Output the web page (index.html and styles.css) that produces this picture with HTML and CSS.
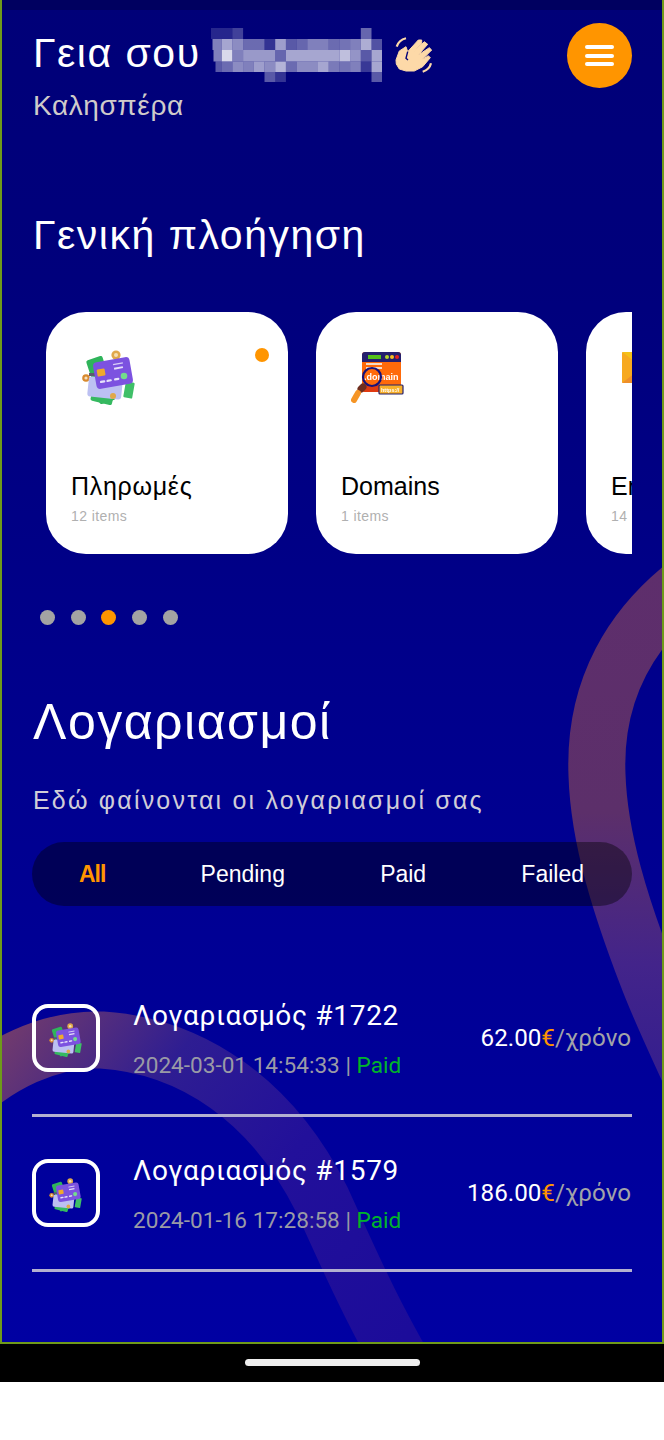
FILE: index.html
```html
<!DOCTYPE html>
<html lang="el">
<head>
<meta charset="utf-8">
<title>Λογαριασμοί</title>
<link rel="stylesheet" href="styles.css">
</head>
<body>
<svg width="0" height="0" class="defs">
  <defs>
    <symbol id="pay" viewBox="0 0 60 60">
      <rect x="12.5" y="12" width="17" height="46" rx="2" fill="#2fb45a" transform="rotate(-18 21 35)"/>
      <rect x="44.5" y="37" width="9" height="16" rx="1" fill="#3fbf68" transform="rotate(10 49 45)"/>
      <rect x="11" y="48" width="22" height="10" rx="2" fill="#35b960" transform="rotate(14 22 53)"/>
      <circle cx="36" cy="10" r="4.6" fill="#e0a84a"/>
      <circle cx="36" cy="10" r="2" fill="#f5e0b0"/>
      <circle cx="6" cy="33" r="3.8" fill="#d88a2e"/>
      <circle cx="6" cy="33" r="1.6" fill="#f3e0c0"/>
      <rect x="8" y="33" width="34" height="20" rx="3" fill="#bcc0f2" transform="rotate(6 25 43)"/>
      <rect x="9" y="28" width="9" height="3" fill="#5c5a70"/>
      <circle cx="33" cy="51" r="3" fill="#e0a84a"/>
      <rect x="14.5" y="14.5" width="37" height="27" rx="4" fill="#7c52e0" transform="rotate(-10 33 28)"/>
      <rect x="17" y="24" width="8" height="7" rx="1" fill="#f0a92c" transform="rotate(-10 21 27)"/>
      <rect x="33" y="18" width="10" height="1.5" fill="#d9cff7" transform="rotate(-10 38 19)"/>
      <rect x="34" y="22" width="9" height="2" fill="#e6dffa" transform="rotate(-10 38 23)"/>
      <circle cx="44" cy="31" r="3.3" fill="#73dd8c"/>
      <rect x="20" y="35.5" width="5.4" height="2.2" rx="1" fill="#e6e2fb" transform="rotate(-10 23 37)"/>
      <rect x="26.5" y="34.5" width="5.4" height="2.2" rx="1" fill="#e6e2fb" transform="rotate(-10 29 36)"/>
      <rect x="34" y="33" width="5.4" height="2.2" rx="1" fill="#e6e2fb" transform="rotate(-10 37 34)"/>
    </symbol>
  </defs>
</svg>

<div class="phone">
  <div class="screen">
    <svg class="swoosh" viewBox="0 0 660 1342" aria-hidden="true">
      <defs>
        <linearGradient id="gr" gradientUnits="userSpaceOnUse" x1="0" y1="560" x2="0" y2="1120">
          <stop offset="0" stop-color="#5e2e6c"/>
          <stop offset=".45" stop-color="#5c2f6a"/>
          <stop offset=".72" stop-color="#43248a"/>
          <stop offset="1" stop-color="#2f1c90"/>
        </linearGradient>
        <linearGradient id="gl" gradientUnits="userSpaceOnUse" x1="0" y1="1040" x2="400" y2="1340">
          <stop offset="0" stop-color="#703a6e"/>
          <stop offset=".3" stop-color="#2e1d92"/>
          <stop offset=".6" stop-color="#22109a"/>
          <stop offset="1" stop-color="#1c0c9a"/>
        </linearGradient>
      </defs>
      <path class="arc-r" d="M 720 560 C 620 620 592 700 595 775 C 597 840 620 910 645 975 C 660 1015 680 1055 700 1100"/>
      <path class="arc-l" d="M -50 1108 C -5 1062 50 1038 100 1040 C 190 1046 270 1100 320 1200 C 345 1255 365 1300 390 1345 C 402 1367 415 1390 430 1420"/>
    </svg>

    <header class="head">
      <div class="greet">
        <div class="hello">
          <span>Γεια σου</span>
          <svg class="mosaic" width="171" height="54" viewBox="0 0 171 54" aria-hidden="true">
            <g fill="#fff">
              <rect x="0" y="0" width="21.4" height="11" opacity=".15"/><rect x="21.4" y="0" width="10.7" height="11" opacity=".25"/><rect x="149.8" y="0" width="10.7" height="11" opacity=".4"/>
              <rect x="1.5" y="11" width="9.2" height="11" opacity=".5"/><rect x="10.7" y="11" width="10.7" height="11" opacity=".65"/><rect x="21.4" y="11" width="10.7" height="11" opacity=".55"/><rect x="32.1" y="11" width="21.4" height="11" opacity=".42"/><rect x="53.5" y="11" width="10.7" height="11" opacity=".2"/><rect x="64.2" y="11" width="10.7" height="11" opacity=".62"/><rect x="74.9" y="11" width="10.7" height="11" opacity=".35"/><rect x="85.6" y="11" width="10.7" height="11" opacity=".4"/><rect x="96.3" y="11" width="21.4" height="11" opacity=".5"/><rect x="117.7" y="11" width="10.7" height="11" opacity=".42"/><rect x="128.4" y="11" width="10.7" height="11" opacity=".45"/><rect x="139.1" y="11" width="10.7" height="11" opacity=".5"/><rect x="149.8" y="11" width="10.7" height="11" opacity=".68"/><rect x="160.5" y="11" width="10.5" height="11" opacity=".32"/>
              <rect x="2.5" y="22" width="8.2" height="11.5" opacity=".5"/><rect x="10.7" y="22" width="10.7" height="11.5" opacity=".85"/><rect x="21.4" y="22" width="10.7" height="11.5" opacity=".5"/><rect x="32.1" y="22" width="32.1" height="11.5" opacity=".6"/><rect x="64.2" y="22" width="10.7" height="11.5" opacity=".4"/><rect x="74.9" y="22" width="53.5" height="11.5" opacity=".65"/><rect x="128.4" y="22" width="10.7" height="11.5" opacity=".75"/><rect x="139.1" y="22" width="10.7" height="11.5" opacity=".58"/><rect x="149.8" y="22" width="10.7" height="11.5" opacity=".35"/><rect x="160.5" y="22" width="10.5" height="11.5" opacity=".65"/>
              <rect x="4.5" y="33.5" width="6.2" height="10.5" opacity=".35"/><rect x="10.7" y="33.5" width="10.7" height="10.5" opacity=".42"/><rect x="21.4" y="33.5" width="10.7" height="10.5" opacity=".55"/><rect x="32.1" y="33.5" width="10.7" height="10.5" opacity=".5"/><rect x="42.8" y="33.5" width="10.7" height="10.5" opacity=".62"/><rect x="53.5" y="33.5" width="10.7" height="10.5" opacity=".55"/><rect x="64.2" y="33.5" width="10.7" height="10.5" opacity=".7"/><rect x="74.9" y="33.5" width="10.7" height="10.5" opacity=".42"/><rect x="85.6" y="33.5" width="21.4" height="10.5" opacity=".55"/><rect x="107" y="33.5" width="10.7" height="10.5" opacity=".65"/><rect x="117.7" y="33.5" width="10.7" height="10.5" opacity=".48"/><rect x="128.4" y="33.5" width="10.7" height="10.5" opacity=".45"/><rect x="139.1" y="33.5" width="10.7" height="10.5" opacity=".5"/><rect x="149.8" y="33.5" width="10.7" height="10.5" opacity=".22"/><rect x="160.5" y="33.5" width="10.5" height="10.5" opacity=".65"/>
              <rect x="53.5" y="44" width="10.7" height="10" opacity=".35"/><rect x="64.2" y="44" width="10.7" height="10" opacity=".2"/><rect x="160.5" y="44" width="10.5" height="10" opacity=".35"/>
            </g>
          </svg>
          <svg class="wave" width="40" height="38" viewBox="0 0 40 38" aria-hidden="true">
            <path class="palm" d="M2 24 L5.3 15 L12 10.7 L13.7 15.7 L24.3 4 L27.7 4 L27.7 7.3 L20.3 15.7 L30.3 5.7 L33.7 8.3 L24.3 19 L35.3 11.7 L37.7 14 L27.7 24 L34.3 19.7 L36.3 21.7 L28.7 30.7 L20.3 35 L12 35 L5.3 33 L2.3 28 Z"/>
            <path class="palm-line" d="M13.7 15.7 L12 22.3 L14 24"/>
            <path class="palm-arc" d="M2.7 10.7 C4 6.5 8 3.2 12 2.3 M28.7 35.7 C32.5 34.5 36 31.5 37 27.3"/>
          </svg>
        </div>
        <p class="sub">Καλησπέρα</p>
      </div>
      <button class="menu" type="button" aria-label="menu"><i></i><i></i><i></i></button>
    </header>

    <h2 class="overview">Γενική πλοήγηση</h2>

    <div class="cards">
      <article class="card">
        <span class="dot-on"></span>
        <svg class="card-ico pay"><use href="#pay"/></svg>
        <div class="card-text"><h3 class="greek">Πληρωμές</h3><p>12 items</p></div>
      </article>
      <article class="card">
        <svg class="card-ico domain" viewBox="0 0 70 60" aria-hidden="true">
          <rect x="16" y="7" width="39" height="40" rx="3" fill="#ff6a0a"/>
          <path d="M16 40 H55 V44 a3 3 0 0 1 -3 3 H19 a3 3 0 0 1 -3 -3 Z" fill="#e03a10"/>
          <path d="M16 17 V10 a3 3 0 0 1 3 -3 H52 a3 3 0 0 1 3 3 V17 Z" fill="#25206e"/>
          <rect x="22" y="10" width="13" height="4" fill="#54c21a"/>
          <circle cx="41" cy="12" r="2" fill="#b8d82a"/><circle cx="46" cy="12" r="2" fill="#f5c020"/><circle cx="51" cy="12" r="2" fill="#e8241e"/>
          <rect x="20" y="18" width="16" height="2" fill="#f5dcc8"/><rect x="20" y="22" width="16" height="2" fill="#f5dcc8"/>
          <text x="18" y="35" class="dm-text">.domain</text>
          <rect x="33" y="40" width="24" height="9" rx="1" fill="#f8b02a" stroke="#25206e" stroke-width="1.2"/>
          <text x="35" y="47" class="dm-https">https://</text>
          <circle cx="26" cy="32" r="9" fill="none" stroke="#16127a" stroke-width="2.2"/>
          <path d="M17 42 L15 44" stroke="#6e2d1e" stroke-width="7" stroke-linecap="round"/>
          <path d="M12 48 L8 55" stroke="#f59526" stroke-width="6" stroke-linecap="round"/>
        </svg>
        <div class="card-text"><h3>Domains</h3><p>1 items</p></div>
      </article>
      <article class="card">
        <svg class="card-ico email" viewBox="0 0 60 60" aria-hidden="true">
          <rect x="10" y="7" width="46" height="31" rx="2" fill="#f29a1f"/>
          <path d="M10 7 L32 24 L10 38 Z" fill="#f7a91f"/>
          <path d="M10 7 H56 L32 24 Z" fill="#f5c118"/>
          <path d="M10 38 L32 21 L56 38 Z" fill="#ee8f2a"/>
        </svg>
        <div class="card-text"><h3>Email</h3><p>14 items</p></div>
      </article>
    </div>

    <div class="dots"><i></i><i></i><i class="on"></i><i></i><i></i></div>

    <h1 class="title">Λογαριασμοί</h1>
    <p class="lead">Εδώ φαίνονται οι λογαριασμοί σας</p>

    <nav class="tabs">
      <a class="tab active">All</a>
      <a class="tab">Pending</a>
      <a class="tab">Paid</a>
      <a class="tab">Failed</a>
    </nav>

    <ul class="bills">
      <li class="bill">
        <div class="thumb"><svg><use href="#pay"/></svg></div>
        <div class="bill-main"><h4>Λογαριασμός #1722</h4><p>2024-03-01 14:54:33 | <b>Paid</b></p></div>
        <div class="price"><span class="amt">62.00</span><span class="eur">€</span><span class="per">/χρόνο</span></div>
      </li>
      <li class="bill">
        <div class="thumb"><svg><use href="#pay"/></svg></div>
        <div class="bill-main"><h4>Λογαριασμός #1579</h4><p>2024-01-16 17:28:58 | <b>Paid</b></p></div>
        <div class="price"><span class="amt">186.00</span><span class="eur">€</span><span class="per">/χρόνο</span></div>
      </li>
    </ul>
  </div>
  <div class="navbar"><span class="pill"></span></div>
</div>
</body>
</html>
```

FILE: styles.css
```css
* { box-sizing: border-box; }
html, body { margin: 0; padding: 0; background: #fff; }
body { font-family: "Liberation Sans", Arial, sans-serif; }
.defs { position: absolute; }
.phone { width: 664px; }
.screen {
  position: relative;
  height: 1344px;
  overflow: hidden;
  border: solid #6f9a1a;
  border-width: 0 2px 2px;
  padding: 9px 30px 0;
  background: linear-gradient(#000078 0, #00007c 280px, #00008c 700px, #0000a2 1344px);
}
.screen::before {
  content: "";
  position: absolute;
  left: -2px; right: -2px; top: 0;
  height: 10px;
  background: #000060;
}
.swoosh { position: absolute; left: 0; top: 0; width: 660px; height: 1342px; }
.swoosh path { fill: none; stroke-width: 57; }
.arc-r { stroke: url(#gr); }
.arc-l { stroke: url(#gl); }
.head, .overview, .cards, .dots, .title, .lead, .tabs, .bills { position: relative; }
.head { display: flex; justify-content: space-between; align-items: flex-start; padding-top: 14px; height: 122px; }
.hello { display: flex; align-items: center; height: 60px; margin-left: 1px; color: #fff; font-size: 41px; letter-spacing: 1.5px; line-height: 60px; }
.mosaic { margin: 4px 0 0 10px; flex: none; filter: blur(.6px); }
.wave { margin: 4px 0 0 12px; flex: none; }
.palm { fill: #fdd9a8; stroke: #fdd9a8; stroke-width: 1; stroke-linejoin: round; }
.palm-line { fill: none; stroke: #000078; stroke-width: 1.4; }
.palm-arc { fill: none; stroke: #fdd9a8; stroke-width: 2.2; }
.sub { margin: 5px 0 0 1px; color: #cfcbca; font-size: 28px; line-height: 36px; letter-spacing: .6px; }
.menu {
  width: 65px; height: 65px; border-radius: 50%;
  border: 0; padding: 0; background: #ff9500;
  display: flex; flex-direction: column; justify-content: center; align-items: center; gap: 4.7px;
}
.menu i { display: block; width: 29px; height: 4px; border-radius: 2px; background: #fff; }
.overview { margin: 74px 0 0 1px; color: #fff; font-weight: 400; font-size: 41px; line-height: 60px; letter-spacing: 1.5px; }
.cards { display: flex; gap: 28px; margin-top: 47px; padding-left: 14px; width: 600px; overflow: hidden; }
.card {
  position: relative;
  flex: none;
  width: 242px; height: 242px;
  border-radius: 40px;
  background: #fff;
  padding: 33px 25px 0;
}
.card-ico { display: block; width: 60px; height: 60px; }
.card-ico.pay { margin-left: 9px; filter: blur(.3px); }
.card-ico.domain { width: 70px; margin-left: 5px; filter: blur(.3px); }
.card-ico.email { margin-left: 1px; }
.dm-text { font-size: 9px; font-weight: 700; fill: #fff; font-family: "Liberation Sans", sans-serif; }
.dm-https { font-size: 5.5px; font-weight: 700; fill: #fff; font-family: "Liberation Sans", sans-serif; }
.dot-on { position: absolute; right: 19px; top: 36px; width: 14px; height: 14px; border-radius: 50%; background: #ff9500; }
.card-text { margin-top: 66px; }
.card-text h3 { margin: 0; color: #000; font-weight: 400; font-size: 25px; line-height: 30px; }
.card-text h3.greek { letter-spacing: .7px; }
.card-text p { margin: 6px 0 0; color: #b0b0b0; font-size: 14px; line-height: 18px; letter-spacing: .4px; }
.dots { display: flex; gap: 15.7px; margin: 56px 0 0 8px; }
.dots i { display: block; width: 15px; height: 15px; border-radius: 50%; background: #a3a3a3; }
.dots i.on { background: #ff9500; }
.title { margin: 62px 0 0 1px; color: #fff; font-weight: 400; font-size: 50px; line-height: 70px; letter-spacing: 1.5px; }
.lead { margin: 27px 0 0 1px; color: #d0cdd8; font-size: 25px; line-height: 32px; letter-spacing: 2.2px; }
.tabs {
  display: flex; align-items: center; justify-content: space-between;
  margin-top: 26px; height: 64px; width: 600px;
  border-radius: 32px; background: rgba(0,0,0,.4);
  padding: 0 48px 0 47px;
}
.tab { color: #fff; font-size: 23px; line-height: 28px; }
.tab.active { color: #ff9500; font-weight: 700; letter-spacing: -1px; }
.bills { list-style: none; margin: 56px 0 0; padding: 0; width: 600px; }
.bill { display: flex; align-items: center; height: 155px; border-bottom: 3px solid #b3b0d0; }
.thumb {
  flex: none; width: 68px; height: 68px; border: 4px solid #fff; border-radius: 16px;
  display: flex; align-items: center; justify-content: center;
}
.thumb svg { width: 37px; height: 37px; }
.bill-main { margin-left: 33px; padding-top: 3px; flex: 1; }
.bill-main h4 { margin: 0; color: #fff; font-weight: 400; font-family: Roboto, sans-serif; font-size: 28px; line-height: 34px; letter-spacing: .7px; }
.bill-main p { margin: 18px 0 0; color: #9a9aa6; font-family: Roboto, sans-serif; font-size: 22.6px; line-height: 30px; }
.bill-main b { color: #00b52a; font-weight: 400; }
.price { font-family: Roboto, sans-serif; font-size: 24.2px; white-space: nowrap; margin-right: 1px; }
.amt { color: #fff; }
.eur { color: #ff9500; }
.per { color: #a3a3a8; }
.navbar { height: 38px; background: #000; display: flex; justify-content: center; padding-top: 15px; }
.pill { display: block; width: 175px; height: 7px; border-radius: 4px; background: #eee; }
```
